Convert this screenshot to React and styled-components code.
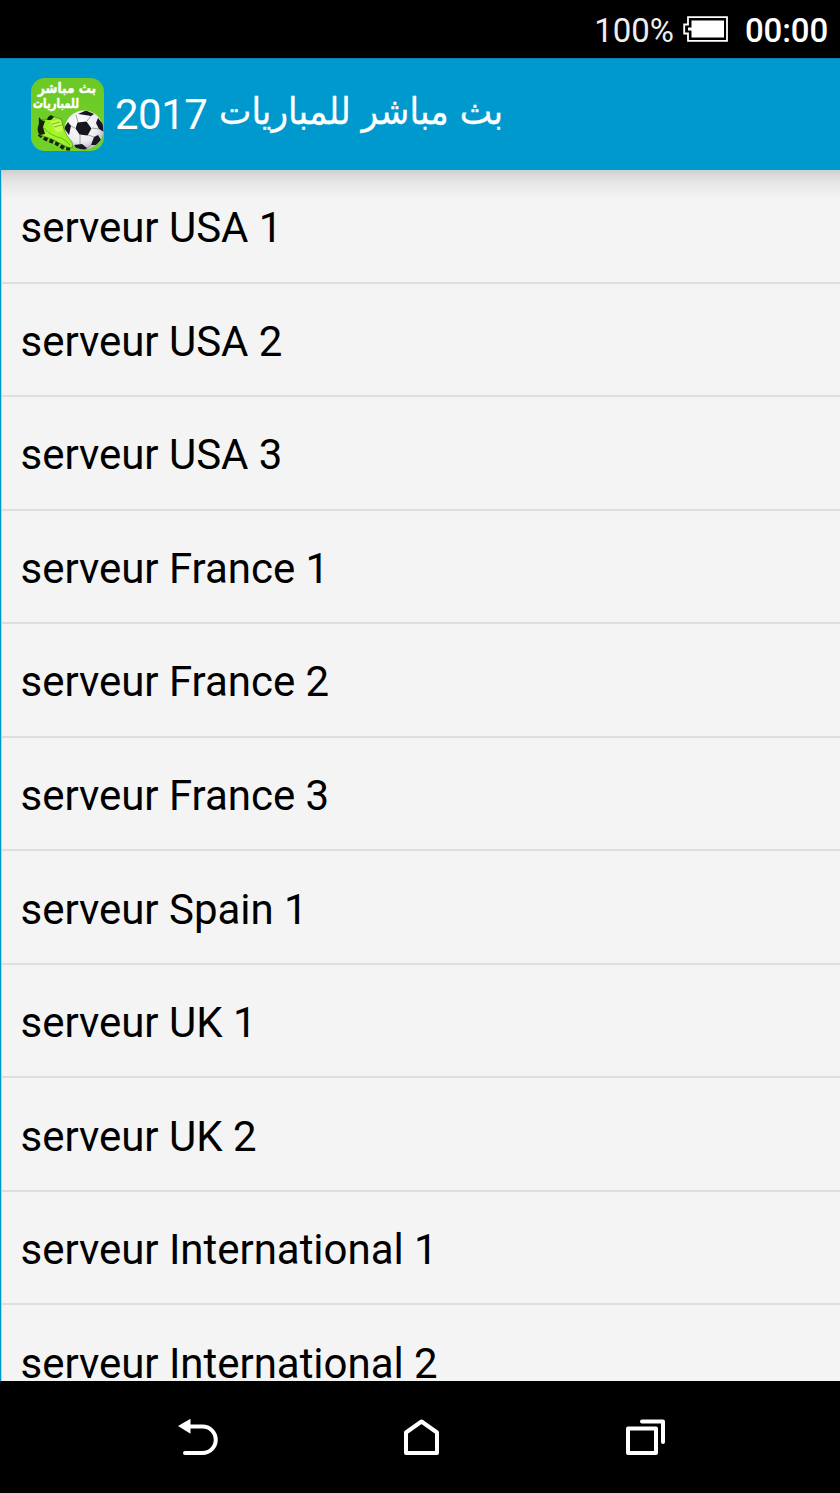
import React from "react";
import styled, { createGlobalStyle } from "styled-components";

const GlobalStyle = createGlobalStyle`
  * { box-sizing: border-box; }
  body { margin: 0; background: #000; }
`;

const Screen = styled.div`
  display: flex;
  flex-direction: column;
  width: 840px;
  height: 1493px;
  overflow: hidden;
  background: #000;
  font-family: Roboto, "DejaVu Sans", sans-serif;
`;

const StatusBar = styled.header`
  display: flex;
  flex: none;
  align-items: center;
  justify-content: flex-end;
  height: 58px;
  padding: 3px 12px 0 0;
  color: #fff;
  font-size: 33px;
  line-height: 40px;
`;

const BatteryLevel = styled.span`
  color: #eee;
  margin-right: 9px;
`;

const Clock = styled.span`
  margin-left: 16px;
  font-weight: 500;
  letter-spacing: -0.15px;
`;

const BatteryIcon = styled.svg`
  display: block;
  width: 46px;
  height: 26px;
  margin-top: -4px;
`;

const AppBar = styled.div`
  display: flex;
  flex: none;
  align-items: flex-start;
  height: 112px;
  padding: 20px 0 0 31px;
  background: #0099ce;
  border-top: 1px solid #0684b3;
  color: #fff;
`;

const Logo = styled.svg`
  display: block;
  flex: none;
  width: 73px;
  height: 73px;
  margin-top: -1px;
`;

const Title = styled.h1`
  display: flex;
  margin: 11px 0 0 11px;
  font-size: 42px;
  font-weight: 400;
  line-height: 50px;
`;

const Year = styled.span`
  flex: none;
  width: 103px;
  letter-spacing: -0.5px;
`;

const ArabicTitle = styled.svg`
  display: block;
  width: 290px;
  height: 50px;
  overflow: visible;
  font-family: "DejaVu Sans", sans-serif;
  font-size: 37px;
  fill: #fff;
  stroke: #fff;
  stroke-width: 0.3;
`;

const List = styled.ul`
  flex: none;
  height: 1211px;
  margin: 0;
  padding: 0 0 0 1px;
  overflow: hidden;
  list-style: none;
  border-left: 1px solid #0099ce;
  box-shadow: inset 1px 0 #a9d8e9;
  background: linear-gradient(#cfcfcf 0, #dedede 7px, #ebebeb 17px, #f4f4f4 30px);
`;

const Row = styled.li`
  display: flex;
  align-items: center;
  height: 113.55px;
  padding: 5px 0 0 18.5px;
  border-bottom: 2px solid #dedede;
  color: #000;
  font-size: 42px;
  line-height: 50px;
  letter-spacing: -0.03px;
  white-space: nowrap;
`;

const NavBar = styled.nav`
  display: flex;
  flex: 1;
  align-items: flex-start;
  padding: 37px 0 0 177px;
`;

const NavIcon = styled.svg`
  display: block;
  flex: none;
  width: 42px;
  height: 40px;
  margin-right: ${(p) => p.$gap || 0}px;
  fill: none;
  stroke: #fff;
  stroke-width: 4;
  stroke-linejoin: round;
  stroke-linecap: round;
`;

const servers = [
  "USA 1", "USA 2", "USA 3",
  "France 1", "France 2", "France 3",
  "Spain 1", "UK 1", "UK 2",
  "International 1", "International 2",
];

function AppLogo() {
  return (
    <Logo viewBox="0 0 73 73">
      <defs>
        <linearGradient id="turf" x1="0" y1="0" x2="0" y2="1">
          <stop offset="0" stopColor="#6cc826" />
          <stop offset="1" stopColor="#70d226" />
        </linearGradient>
        <linearGradient id="boot" x1="0" y1="0" x2="1" y2="1">
          <stop offset="0" stopColor="#8fe81c" />
          <stop offset=".5" stopColor="#a8f52e" />
          <stop offset="1" stopColor="#8cee20" />
        </linearGradient>
        <radialGradient id="leather" cx=".42" cy=".35" r=".65">
          <stop offset="0" stopColor="#fff" />
          <stop offset=".7" stopColor="#ececf0" />
          <stop offset="1" stopColor="#b9b9c4" />
        </radialGradient>
        <clipPath id="ball"><circle cx="53" cy="52" r="19.5" /></clipPath>
      </defs>
      <rect width="73" height="73" rx="14" fill="url(#turf)" />
      <g fill="#fff" stroke="#fff" strokeWidth=".5" fontFamily="DejaVu Sans" fontWeight="700" fontSize="14">
        <text x="7" y="14.5" textLength="58" lengthAdjust="spacingAndGlyphs">بث مباشر</text>
        <text x="2" y="30" fontSize="13.5" textLength="46" lengthAdjust="spacingAndGlyphs">للمباريات</text>
      </g>
      <circle cx="53" cy="52" r="19.5" fill="url(#leather)" />
      <g clipPath="url(#ball)">
        <path d="M47 44 56 43 61 50 57 57 49 56 45 50Z" fill="#171721" transform="translate(-.5 .5)" />
        <path d="M47 36 55 32.5 63 36 60 38 54 37ZM67 40 72 46 73 54 68 51 65 45ZM63 59 67 57 70 62 65 67 60 67ZM43 67 51 66 56 70 54 73 46 72ZM33 50 37 44 40 48 38 57Z" fill="#171721" />
        <path d="M56 43 60 38M61 50 68 51M57 57 63 59M49 56 49 66M44 50 40 48M47 44 45 37M56 70 60 67" fill="none" stroke="#8c8c96" strokeWidth=".8" />
      </g>
      <path d="M8 56 15 61 25 65 33 70 40 71" fill="none" stroke="#16240c" strokeWidth="4" strokeDasharray="4 2.2" />
      <path d="M8 40Q10 42 13 42Q17 42 18 39L21 38 30 41 33 51Q35 58 41 64L42 69Q40 71 34 68L21 61 9 57Q5 53 8 46Z" fill="url(#boot)" stroke="#397818" strokeWidth=".6" />
      <path d="M19 43 30 42 32 52Q27 56 24 52Z" fill="#c7fb55" />
      <path d="M13 50Q20 58 30 60Q35 62 39 67" fill="none" stroke="#61be18" strokeWidth="1" />
      <path d="M21 46 29 44M23 49 31 47" fill="none" stroke="#5da91b" strokeWidth=".8" />
      <path d="M8 39Q10 43 14 43L12 49 14 56 9 57Q5 53 8 46ZM17 39 20 37 23 39 20 42 16 42Z" fill="#17210f" />
    </Logo>
  );
}

export default function App() {
  return (
    <Screen>
      <GlobalStyle />
      <StatusBar>
        <BatteryLevel>100%</BatteryLevel>
        <BatteryIcon viewBox="0 0 46 26">
          <path d="M5 1.2H44V24.8H5V17.5H1.2V8.5H5Z" fill="none" stroke="#fff" strokeWidth="1.8" />
          <path d="M8.5 4.5H41V21.5H8.5V14.5H5V11.5H8.5Z" fill="#fff" />
        </BatteryIcon>
        <Clock>00:00</Clock>
      </StatusBar>
      <AppBar>
        <AppLogo />
        <Title>
          <Year>2017</Year>
          <ArabicTitle viewBox="0 0 290 50">
            <text x="1" y="33.5" textLength="284" lengthAdjust="spacingAndGlyphs">بث مباشر للمباريات</text>
          </ArabicTitle>
        </Title>
      </AppBar>
      <List>
        {servers.map((server) => <Row key={server}>serveur {server}</Row>)}
      </List>
      <NavBar>
        <NavIcon viewBox="0 0 42 40" $gap={182}>
          <path d="M12 8.5H25.5A13.25 13.25 0 0 1 25.5 35H8" />
          <path d="M1 8 13.5 0.7V15.7Z" fill="#fff" stroke="none" />
        </NavIcon>
        <NavIcon viewBox="0 0 42 40" $gap={182}>
          <path d="M5 35V14.5L20.5 3.5 36 14.5V35Z" />
        </NavIcon>
        <NavIcon viewBox="0 0 42 40">
          <path d="M3 10.5H31V35H3ZM17 3.5H38V24" />
        </NavIcon>
      </NavBar>
    </Screen>
  );
}
